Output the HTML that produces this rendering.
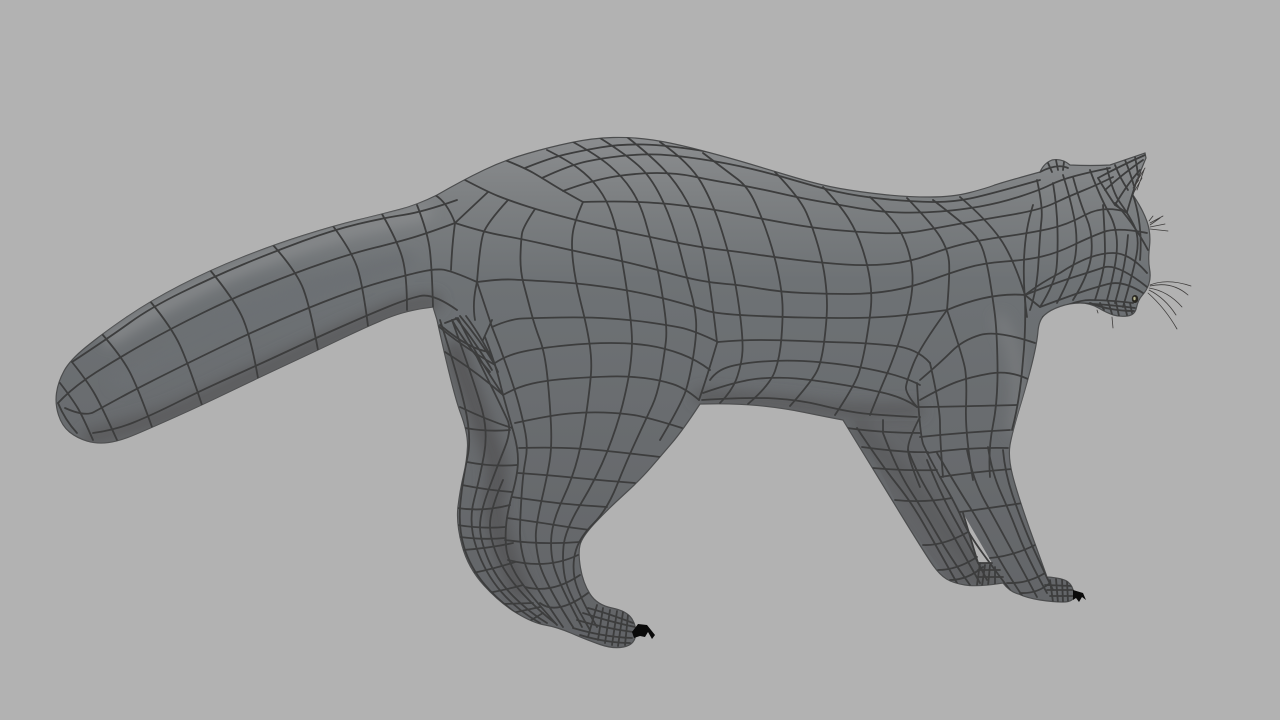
<!DOCTYPE html>
<html lang="en"><head><meta charset="utf-8"><title>Mesh render</title>
<style>html,body{margin:0;padding:0;background:#b2b2b2;width:1280px;height:720px;overflow:hidden}svg{display:block}</style>
</head><body>
<svg xmlns="http://www.w3.org/2000/svg" width="1280" height="720" viewBox="0 0 1280 720">
<defs>
<linearGradient id="b" x1="0" y1="137" x2="0" y2="647" gradientUnits="userSpaceOnUse">
<stop offset="0" stop-color="#8b8d8f"/><stop offset=".12" stop-color="#7d8082"/><stop offset=".28" stop-color="#6e7275"/><stop offset=".55" stop-color="#696c6f"/><stop offset="1" stop-color="#626467"/>
</linearGradient>
<filter id="f" x="-20%" y="-20%" width="140%" height="140%"><feGaussianBlur stdDeviation="7"/></filter>
<filter id="s" x="-5%" y="-5%" width="110%" height="110%"><feGaussianBlur stdDeviation="0.35"/></filter>
<path id="sil" d="M437 195 Q417 205 399.5 209.5 Q382 214 357.5 220 Q333 226 303 235.5 Q273 245 241.5 257.5 Q210 270 180 285.5 Q150 301 126 317.5 Q102 334 86 347 Q70 360 64 371 Q58 382 56.5 393 Q55 404 58.5 415 Q62 426 69.5 432 Q77 438 87 441 Q97 444 108.5 442.5 Q120 441 136.5 434 Q153 427 177.5 416 Q202 405 230 391.5 Q258 378 288 364 Q318 350 343 338 Q368 326 387.5 318 Q407 310 433 307 L437 320 Q453 393 460.5 413 Q468 433 467.5 446.5 Q467 460 463.5 475 Q460 490 458 506.5 Q456 523 462 545.5 Q468 568 484 585.5 Q500 603 516.5 613 Q533 623 545 625 Q557 627 572 633.5 Q587 640 600 644.5 Q613 649 623.5 647 Q634 645 635.5 636 Q637 627 632 619 Q627 611 612 608 Q597 605 590 594 Q583 583 580.5 568 Q578 553 580 545 Q582 537 594.5 523.5 Q607 510 623.5 495 Q640 480 650 468.5 Q660 457 671.5 443.5 Q683 430 700 404 Q733 403 758 405.5 Q783 408 805 412.5 Q827 417 843 420 L900 513 Q927 557 933.5 566 Q940 575 946.5 579 Q953 583 965 585 Q977 587 1003 583 Q1010 592 1018.5 594 Q1027 598 1040 600 Q1053 602 1063 602 Q1075 602 1074 594 Q1073 586 1068 582 Q1063 578 1047 577 L1030 530 Q1017 493 1012.5 475 Q1008 457 1010 445 Q1012 433 1020 406.5 Q1028 380 1032.5 361.5 Q1037 343 1038 331 Q1039 320 1044.5 315 Q1050 310 1060 306.5 Q1070 303 1080 303 Q1090 303 1098.5 308 Q1107 313 1113.5 315 Q1120 317 1127.5 316 Q1135 315 1136.5 307.5 Q1138 300 1142.5 295 Q1147 290 1149 283.5 Q1151 277 1149.5 268.5 Q1148 260 1149.5 246.5 Q1151 233 1147 221.5 Q1143 210 1133 195 L1137 180 L1146 158 L1145 153 L1110 165 Q1090 166 1070 165 Q1062 158 1052 160 Q1044 163 1040 172 Q1000 183 993.5 185.5 Q987 188 970 192.5 Q953 197 930 197 Q907 197 883.5 194.5 Q860 192 840 188.5 Q820 185 795 177.5 Q770 170 750 164 Q730 158 701.5 150.5 Q673 143 653 140 Q633 137 613 137.5 Q593 138 571.5 142.5 Q550 147 527.5 153.5 Q505 160 484 170 Q463 180 437 195 Z"/>
<clipPath id="c"><use href="#sil"/></clipPath>
</defs>
<rect width="1280" height="720" fill="#b2b2b2"/>
<use href="#sil" fill="url(#b)" stroke="#4c4d4e" stroke-width="1.2"/>
<g clip-path="url(#c)">
<g filter="url(#f)" fill="none" stroke-linecap="round">
<path d="M110 338 Q150 312 181 296 Q213 280 243 267 Q273 255 303 245 Q333 235 358 228 Q383 222 425 212" stroke="#8b8d8f" stroke-width="12"/>
<path d="M90 438 Q152 422 177 411 Q202 400 230 386 Q258 373 288 359 Q318 345 343 333 Q368 322 387 313 Q407 305 433 302" stroke="#5a5a5b" stroke-width="16"/>
<path d="M120 380 Q188 345 219 330 Q250 315 280 302 Q310 290 336 281 Q363 272 407 260" stroke="#6c7073" stroke-width="16"/>
<path d="M700 396 Q783 402 813 407 Q843 412 917 410" stroke="#58585a" stroke-width="12"/>
<path d="M455 350 Q480 420 490 445 Q500 470 495 495 Q490 520 520 590" stroke="#565759" stroke-width="20"/>
<path d="M860 430 Q900 470 925 505 Q950 540 985 580" stroke="#5a5b5d" stroke-width="18"/>
<path d="M1000 320 Q1025 360 1015 430" stroke="#7b7e80" stroke-width="10"/>
</g>
<polygon points="855,421 916,421 925,455 960,510 985,565 1000,583 950,582 905,520" fill="#5e5f61" opacity=".4"/>
</g>
<polygon points="963,513 978,563 992,563" fill="#b2b2b2"/>
<g clip-path="url(#c)"><g fill="none" stroke="#3c3d3e" stroke-width="1.8" stroke-linecap="round" stroke-linejoin="round" filter="url(#s)">
<!-- tail -->
<path d="M72 362 Q110 337 130 322.5 Q150 308 181.5 292.5 Q213 277 243 264.5 Q273 252 303 241 Q333 230 358 224 Q383 218 403 215 Q423 212 457 200"/>
<path d="M58 403 Q73 387 96.5 372 Q120 357 146 342.5 Q172 328 202.5 313 Q233 298 265 285 Q297 272 325 262.5 Q353 253 375.5 247.5 Q398 242 413 237.5 Q428 233 455 223"/>
<path d="M65 408 Q85 417 94 412 Q103 407 120.5 397.5 Q138 388 163 375.5 Q188 363 219 348 Q250 333 280 320 Q310 307 336.5 297 Q363 287 385 281 Q407 275 420 272 Q433 269 441.5 269.5 Q450 270 477 282"/>
<path d="M93 433 Q115 430 133.5 422.5 Q152 415 177 402.5 Q202 390 230 377.5 Q258 365 288 351 Q318 337 343 326 Q368 315 387.5 307 Q407 299 420 296 Q433 293 457 310"/>
<path d="M102 334 Q122 357 130 372.5 Q138 388 152 427"/>
<path d="M150 301 Q172 328 180 345.5 Q188 363 202 405"/>
<path d="M210 270 Q233 298 241.5 315.5 Q250 333 258 378"/>
<path d="M273 245 Q297 272 303.5 289.5 Q310 307 318 350"/>
<path d="M333 226 Q353 253 358 270 Q363 287 368 326"/>
<path d="M382 214 Q398 242 402.5 258.5 Q407 275 407 310"/>
<path d="M417 205 Q428 233 430 251.5 Q432 270 433 307"/>
<path d="M72 362 Q88 382 95 394.5 Q102 407 117 440"/>
<path d="M60 383 Q73 400 78 408.5 Q83 417 93 440"/>
<path d="M58 403 Q65 420 77 433"/>
<!-- body rows -->
<path d="M465 180 Q488 192 498 196 Q508 200 521.5 204.5 Q535 209 555 214.5 Q575 220 596 225 Q617 230 633.5 233.5 Q650 237 674 242 Q698 247 719 249.5 Q740 252 756.5 254.5 Q773 257 798 260 Q823 263 845.5 264.5 Q868 266 889 264 Q910 262 928.5 255 Q947 248 963.5 244 Q980 240 1005 236.5 Q1030 233 1048.5 229 Q1067 225 1085 215 Q1103 205 1127 212"/>
<path d="M455 223 Q483 232 502.5 235.5 Q522 239 546 244.5 Q570 250 596 255.5 Q622 261 640 265.5 Q658 270 672.5 274 Q687 278 700 280.5 Q713 283 726.5 284 Q740 285 760 288.5 Q780 292 803.5 293 Q827 294 849.5 294 Q872 294 892 290.5 Q912 287 931 280 Q950 273 966.5 268 Q983 263 1005 261.5 Q1027 260 1042 256.5 Q1057 253 1073.5 245 Q1090 237 1103.5 232 Q1117 227 1147 233"/>
<path d="M477 282 Q500 279 511.5 279.5 Q523 280 550 281.5 Q577 283 602 286.5 Q627 290 645 294 Q663 298 679 302.5 Q695 307 706 310.5 Q717 314 748.5 315.5 Q780 317 803.5 317.5 Q827 318 848.5 318 Q870 318 890 316.5 Q910 315 947 310"/>
<path d="M947 310 Q990 292 1025 295"/>
<path d="M1025 295 Q1042 282 1060 273 Q1090 253 1113 253 Q1130 253 1147 273"/>
<path d="M1025 295 Q1055 283 1072.5 277.5 Q1090 272 1103.5 267.5 Q1117 263 1147 287"/>
<path d="M1025 295 L1040 307 Q1067 297 1080 292.5 Q1093 288 1108 284 Q1123 280 1143 293"/>
<path d="M1043 317 Q1073 300 1090 300 Q1107 300 1133 303"/>
<path d="M492 327 Q510 319 522.5 318.5 Q535 318 561 317.5 Q587 317 609.5 318.5 Q632 320 649.5 322.5 Q667 325 680 327.5 Q693 330 718 342"/>
<path d="M718 342 Q740 340 760 340 Q780 340 803.5 341 Q827 342 847 342.5 Q867 343 892 345.5 Q917 348 930 363"/>
<path d="M583 202 Q563 191 552.5 184.5 Q542 178 533.5 173 Q525 168 505 160"/>
<path d="M583 202 Q617 201 638.5 202 Q660 203 673.5 204.5 Q687 206 702 208 Q717 210 740 214.5 Q763 219 788 223.5 Q813 228 835 230 Q857 232 880 233 Q903 234 920 231 Q937 228 958.5 224 Q980 220 1010 215 Q1040 210 1053.5 203.5 Q1067 197 1082 191 Q1097 185 1113 177"/>
<path d="M563 191 Q593 180 615 176.5 Q637 173 657 173 Q677 173 693.5 176.5 Q710 180 733.5 184 Q757 188 778.5 193 Q800 198 820 201.5 Q840 205 860 208.5 Q880 212 900 212.5 Q920 213 940 211.5 Q960 210 980 206.5 Q1000 203 1020 196.5 Q1040 190 1050 185 Q1060 180 1075 176 Q1090 172 1110 168"/>
<path d="M542 178 Q570 165 586.5 161.5 Q603 158 621.5 156 Q640 154 656.5 154.5 Q673 155 700 159 Q727 163 752 169 Q777 175 802 182.5 Q827 190 848.5 194 Q870 198 895 200 Q920 202 936.5 202 Q953 202 970 198.5 Q987 195 1040 180"/>
<path d="M525 168 Q550 158 565 154.5 Q580 151 600 147.5 Q620 144 643.5 144.5 Q667 145 710 152"/>
<!-- body columns -->
<path d="M535 209 Q523 227 522 233.5 Q521 240 520.5 255 Q520 270 523.5 283.5 Q527 297 531 312 Q535 327 540 340 Q545 353 547.5 378 Q550 403 551 425 Q552 447 549.5 462 Q547 477 542 498.5 Q537 520 536 531.5 Q535 543 539 561.5 Q543 580 573 627"/>
<path d="M583 202 Q575 220 573 231.5 Q571 243 573 261.5 Q575 280 581 303.5 Q587 327 589.5 343.5 Q592 360 591 373.5 Q590 387 586.5 412 Q583 437 578 457 Q573 477 563 498.5 Q553 520 551.5 535 Q550 550 553.5 565 Q557 580 582 627"/>
<path d="M508 200 Q487 223 483.5 233 Q480 243 477 282"/>
<path d="M488 192 L455 223 Q452 245 451 270"/>
<path d="M435 195 Q447 202 455 223"/>
<path d="M477 282 Q472 303 475 320"/>
<path d="M477 282 L492 327 Q500 347 507.5 368.5 Q515 390 519 405 Q523 420 525.5 433.5 Q528 447 525.5 460 Q523 473 521.5 496.5 Q520 520 520 533.5 Q520 547 525 563.5 Q530 580 563 627"/>
<path d="M547 150 Q567 160 578.5 168.5 Q590 177 598.5 188.5 Q607 200 612 215 Q617 230 619.5 245 Q622 260 624.5 275 Q627 290 629.5 310 Q632 330 632 341.5 Q632 353 630 368 Q628 383 622.5 405 Q617 427 607 452 Q597 477 581 503.5 Q565 530 563.5 546.5 Q562 563 565 578 Q568 593 590 630"/>
<path d="M573 142 Q597 155 610 166 Q623 177 631.5 190 Q640 203 645 220 Q650 237 654 253.5 Q658 270 660.5 284 Q663 298 665 314 Q667 330 666 340 Q665 350 661.5 371.5 Q658 393 652.5 405 Q647 417 637 438.5 Q627 460 617 485 Q607 510 593.5 523.5 Q580 537 576 550 Q572 563 574.5 578 Q577 593 597 627"/>
<path d="M600 138 Q630 157 641.5 168.5 Q653 180 663 201.5 Q673 223 680 250.5 Q687 278 691 292.5 Q695 307 696 320 Q697 333 693.5 355 Q690 377 686 390 Q682 403 660 440"/>
<path d="M627 137 Q650 155 663.5 169 Q677 183 687 201.5 Q697 220 703.5 250 Q710 280 717 342"/>
<path d="M660 142 Q690 163 701.5 183 Q713 203 721.5 230 Q730 257 734 277 Q738 297 740.5 318.5 Q743 340 742.5 351 Q742 362 737.5 376 Q733 390 720 403"/>
<path d="M703 153 Q728 172 738 179.5 Q748 187 755.5 203.5 Q763 220 769 238.5 Q775 257 778.5 274.5 Q782 292 782.5 304.5 Q783 317 781.5 337 Q780 357 775 371 Q770 385 748 404"/>
<path d="M775 172 Q800 198 806.5 213 Q813 228 818 245.5 Q823 263 825 278 Q827 293 827 305.5 Q827 318 824.5 339 Q822 360 817.5 370 Q813 380 790 406"/>
<path d="M823 187 Q840 205 848.5 218.5 Q857 232 862.5 249 Q868 266 870 280 Q872 294 871 306 Q870 318 866.5 339 Q863 360 859 372.5 Q855 385 835 415"/>
<path d="M870 197 Q887 213 895 223.5 Q903 234 907.5 248 Q912 262 912.5 274.5 Q913 287 910.5 301 Q908 315 900.5 337.5 Q893 360 886.5 375 Q880 390 870 415"/>
<path d="M907 198 Q933 225 940.5 237.5 Q948 250 949 261.5 Q950 273 947 310"/>
<path d="M933 200 Q963 223 971.5 231.5 Q980 240 983.5 251.5 Q987 263 989.5 278 Q992 293 994.5 311.5 Q997 330 997.5 365 Q998 400 993 425 Q988 450 990 477"/>
<path d="M960 197 Q987 220 1000 238.5 Q1013 257 1025 295"/>
<path d="M1025 295 Q1026 330 1023 360 Q1020 400 1012 430"/>
<path d="M947 310 Q920 347 913.5 363.5 Q907 380 906 386.5 Q905 393 917 407"/>
<path d="M947 310 Q963 357 965 368.5 Q967 380 966 406.5 Q965 433 973 480"/>
<!-- belly -->
<path d="M710 380 Q717 370 730 366.5 Q743 363 763 361.5 Q783 360 803 361 Q823 362 845 365 Q867 368 887 373 Q907 378 920 385"/>
<path d="M703 393 Q740 380 760 378.5 Q780 377 796.5 378.5 Q813 380 835 383.5 Q857 387 880 392 Q903 397 917 407"/>
<path d="M702 400 Q750 397 775 398.5 Q800 400 820 405 Q840 410 856.5 412.5 Q873 415 917 417"/>
<path d="M717 343 Q707 377 699 400"/>
<path d="M492 320 L483 340"/>
<!-- rear near arcs -->
<path d="M495 363 Q507 355 523.5 351.5 Q540 348 565 345.5 Q590 343 611 343 Q632 343 648.5 345.5 Q665 348 681 354 Q697 360 710 370"/>
<path d="M503 395 Q517 387 532.5 383.5 Q548 380 570 378.5 Q592 377 610 376.5 Q628 376 644 378 Q660 380 672.5 384 Q685 388 699 400"/>
<path d="M515 423 Q552 415 569.5 413.5 Q587 412 603.5 412.5 Q620 413 633.5 415 Q647 417 682 428"/>
<path d="M519 448 Q552 447 577.5 448.5 Q603 450 660 457"/>
<path d="M518 473 Q547 475 572 477.5 Q597 480 635 483"/>
<path d="M512 497 Q547 502 562 503.5 Q577 505 607 507"/>
<path d="M507 518 Q537 522 555 525 Q573 528 590 530"/>
<path d="M505 540 Q540 545 580 542"/>
<path d="M508 560 Q547 570 578 555"/>
<path d="M525 587 Q552 594 580 575"/>
<path d="M540 603 Q557 616 588 593"/>
<path d="M485 337 Q495 363 499 379 Q503 395 506.5 407.5 Q510 420 514 434 Q518 448 518 460.5 Q518 473 512.5 493 Q507 513 506 526.5 Q505 540 506.5 550 Q508 560 515.5 573.5 Q523 587 557 625"/>
<!-- armpit -->
<path d="M445 323 L458 318 Q474 352 503 395"/>
<path d="M452 320 Q466 345 490 372"/>
<path d="M456 318 Q474 340 492 370"/>
<path d="M460 316 Q480 340 495 365"/>
<path d="M466 316 Q484 340 498 372"/>
<path d="M440 325 Q470 350 490 352"/>
<!-- far rear -->
<path d="M437 325 Q460 345 495 365"/>
<path d="M445 352 Q477 372 503 395"/>
<path d="M460 407 Q487 420 512 428"/>
<path d="M465 428 Q488 432 510 430"/>
<path d="M467 462 Q492 467 517 465"/>
<path d="M462 485 Q487 490 512 492"/>
<path d="M457 508 Q483 512 510 505"/>
<path d="M457 525 Q483 529 505 527"/>
<path d="M460 537 Q483 540 505 538"/>
<path d="M463 550 Q490 548 513 543"/>
<path d="M473 573 Q497 568 515 562"/>
<path d="M488 593 Q505 590 523 585"/>
<path d="M502 604 L533 603"/>
<path d="M512 613 L540 607"/>
<path d="M528 622 L543 613"/>
<path d="M440 320 Q457 373 464.5 405 Q472 437 467.5 457 Q463 477 460.5 502 Q458 527 464 547 Q470 567 485 585 Q500 603 530 623"/>
<path d="M452 320 Q477 390 482.5 411.5 Q488 433 484 455 Q480 477 474 500 Q468 523 476.5 548 Q485 573 501 591.5 Q517 610 540 623"/>
<path d="M475 353 Q503 410 507.5 420 Q512 430 504.5 448.5 Q497 467 488.5 490 Q480 513 480 526.5 Q480 540 488.5 560 Q497 580 513.5 596.5 Q530 613 547 623"/>
<path d="M503 480 Q490 510 490 525 Q490 540 498.5 558.5 Q507 577 523.5 594.5 Q540 612 555 623"/>
<!-- rear paw -->
<path d="M597 605 L588 637M603 608 L598 640M610 610 L605 643M617 611 L612 645M623 612 L618 646M628 615 L625 645"/>
<path d="M588 608 Q607 613 633 623M583 613 Q607 621 635 627M577 620 Q603 628 633 632M573 628 Q603 637 632 638M580 635 Q607 643 630 643"/>
<!-- shoulder -->
<path d="M920 380 Q940 363 951.5 351.5 Q963 340 980 335 Q997 330 1035 343"/>
<path d="M920 400 Q943 387 956.5 382 Q970 377 990 373.5 Q1010 370 1030 380"/>
<path d="M917 407 Q940 407 1017 405"/>
<path d="M920 437 Q967 432 1010 430"/>
<path d="M927 453 Q967 447 1008 448"/>
<path d="M940 477 Q973 472 1012 469"/>
<path d="M960 512 Q990 508 1023 503"/>
<path d="M990 558 Q1013 556 1035 545"/>
<path d="M1007 583 Q1027 584 1045 573"/>
<path d="M1020 593 Q1037 594 1050 583"/>
<path d="M930 363 Q940 407 940 423.5 Q940 440 943 477"/>
<path d="M917 383 Q920 437 923.5 445 Q927 453 933.5 465 Q940 477 948.5 492 Q957 507 962.5 520 Q968 533 982.5 553 Q997 573 1010 590"/>
<path d="M937 453 Q957 487 968.5 505 Q980 523 991.5 545 Q1003 567 1023 597"/>
<path d="M967 450 Q973 480 985 501.5 Q997 523 1007 541.5 Q1017 560 1037 597"/>
<path d="M988 447 Q992 473 1001 493 Q1010 513 1018.5 535 Q1027 557 1047 593"/>
<path d="M1003 450 Q1005 473 1012.5 495 Q1020 517 1027.5 535 Q1035 553 1053 590"/>
<!-- far front -->
<path d="M847 428 Q883 433 920 433"/>
<path d="M862 447 Q907 453 928 452"/>
<path d="M873 468 Q907 471 937 470"/>
<path d="M895 500 Q923 503 952 498"/>
<path d="M923 545 Q943 546 968 532"/>
<path d="M938 570 Q957 570 977 557"/>
<path d="M950 580 Q967 580 983 567"/>
<path d="M857 428 Q883 467 897.5 485 Q912 503 926 528 Q940 553 957 583"/>
<path d="M883 420 L883 433 Q897 470 910 490 Q923 510 936.5 533.5 Q950 557 970 585"/>
<path d="M908 450 Q917 473 927 490 Q937 507 950 530 Q963 553 980 583"/>
<path d="M927 460 Q940 493 954 518 Q968 543 987 580"/>
<path d="M920 417 Q908 440 908 449 Q908 458 920 487"/>
<path d="M963 513 L978 563 L992 563"/>
<path d="M980 563 L977 585M985 565 L982 586M990 565 L988 586M995 567 L995 585M978 570 L1000 570M977 577 L1003 577"/>
<!-- front paw -->
<path d="M1050 580 L1053 602M1056 579 L1058 603M1062 579 L1063 602M1067 581 L1068 602M1045 585 L1072 586M1047 590 L1073 590M1050 596 L1073 596"/>
<!-- head cols -->
<path d="M1033 205 Q1025 230 1024 260 Q1023 290 1027 317"/>
<path d="M1037 180 Q1043 207 1041.5 220 Q1040 233 1038.5 261.5 Q1037 290 1030 310"/>
<path d="M1053 183 Q1057 207 1057.5 230 Q1058 253 1056.5 268 Q1055 283 1040 307"/>
<path d="M1063 175 Q1070 197 1074 217 Q1078 237 1075.5 255 Q1073 273 1057 303"/>
<path d="M1073 177 Q1080 203 1086.5 218 Q1093 233 1091.5 253 Q1090 273 1073 300"/>
<path d="M1090 170 Q1100 197 1108.5 212 Q1117 227 1117 245 Q1117 263 1107 300"/>
<path d="M1107 168 Q1113 193 1120 202.5 Q1127 212 1133.5 224.5 Q1140 237 1136.5 255 Q1133 273 1123 307"/>
<path d="M1103 205 Q1105 235 1105 252.5 Q1105 270 1095 300"/>
<path d="M1128 235 Q1126 265 1115 303"/>
<path d="M1075 303 Q1105 304 1135 308M1090 303 Q1110 311 1134 311"/>
<path d="M1115 203 Q1133 222 1148 250M1133 195 Q1143 225 1140 260"/>
<path d="M1100 303 L1104 310M1108 301 L1112 314M1116 302 L1119 316M1124 303 L1127 315M1130 303 L1132 313"/>
<!-- ear -->
<path d="M1098 178 Q1120 166 1145 155"/>
<path d="M1105 190 Q1125 172 1143 160"/>
<path d="M1115 205 Q1128 183 1140 170"/>
<path d="M1127 212 Q1132 195 1137 180"/>
<path d="M1115 165 Q1120 178 1128 190"/>
<path d="M1125 160 Q1130 172 1134 186"/>
<path d="M1135 157 Q1137 166 1138 175"/>
<path d="M1098 178 Q1105 190 1115 205 L1127 213"/>
<path d="M1040 172 Q1057 163 1068 168M1048 163 L1052 172M1056 160 L1058 170M1064 162 L1063 170"/>
</g></g>
<!-- fine hair -->
<g fill="none" stroke="#3f3d3c" stroke-width=".8" stroke-linecap="round">
<path d="M1150 285 Q1167 278 1191 286"/>
<path d="M1150 286 Q1172 281 1188 295"/>
<path d="M1149 288 Q1168 291 1182 307"/>
<path d="M1149 290 Q1165 298 1176 315"/>
<path d="M1148 293 Q1165 308 1177 329"/>
<path d="M1150 223 L1163 216M1150 225 L1160 218M1150 227 L1165 224M1150 229 L1168 231M1149 221 L1153 216"/>
<path d="M1112 317 L1113 328M1097 310 L1098 313"/>
<path d="M1135 186 L1141 172M1137 190 L1144 170M1136 183 L1145 168M1134 192 L1142 178M1133 188 L1139 180"/>
</g>
<ellipse cx="1135" cy="299" rx="3.2" ry="4" fill="#2a2822"/>
<ellipse cx="1134.5" cy="298.5" rx="1.2" ry="1.7" fill="#b5b48f"/>
<polygon points="632,632 638,624 647,625 655,635 652,639 648,632 645,637 640,636 634,638" fill="#0a0a0a"/>
<polygon points="1073,590 1083,593 1086,600 1082,597 1079,602 1076,598 1073,600" fill="#0a0a0a"/>
</svg>
</body></html>
